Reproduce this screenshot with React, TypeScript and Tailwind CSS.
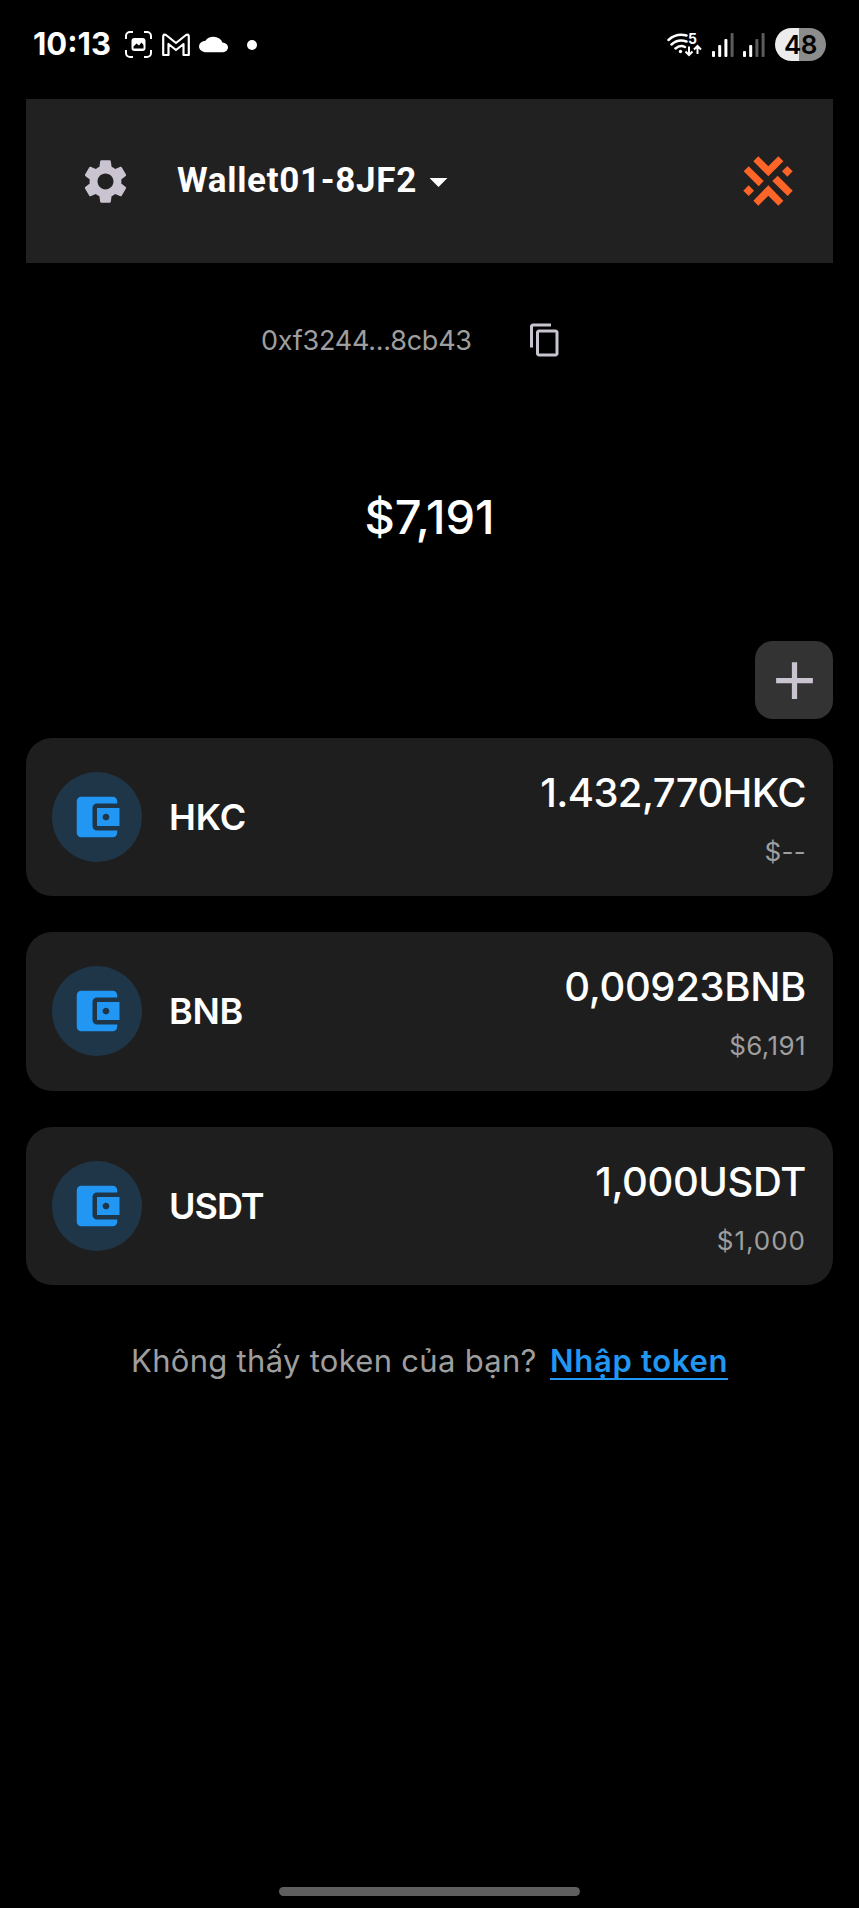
import { MdAccountBalanceWallet, MdAdd, MdArrowDropDown, MdCloud, MdContentCopy, MdSettings } from 'react-icons/md'

interface Token {
  symbol: string
  amount: string
  value: string
  symbolClass: string
  amountClass: string
  valueClass: string
}

const tokens: Token[] = [
  {
    symbol: 'HKC',
    amount: '1.432,770HKC',
    value: '$--',
    symbolClass: 'tracking-[0px]',
    amountClass: 'tracking-[-0.6px]',
    valueClass: 'tracking-[0.3px]',
  },
  {
    symbol: 'BNB',
    amount: '0,00923BNB',
    value: '$6,191',
    symbolClass: 'tracking-[-0.3px]',
    amountClass: 'tracking-[-0.35px]',
    valueClass: 'tracking-[0.4px]',
  },
  {
    symbol: 'USDT',
    amount: '1,000USDT',
    value: '$1,000',
    symbolClass: 'tracking-[-1px]',
    amountClass: 'tracking-[-0.4px]',
    valueClass: 'tracking-[1px]',
  },
]

export default function App() {
  return (
    <div className="flex h-[1908px] w-[859px] flex-col overflow-hidden bg-black font-['Inter','Noto_Sans',sans-serif] text-white">
      <StatusBar />
      <WalletHeader />

      <div className="flex h-[153px] items-center pl-[261px]">
        <span className="w-[266px] pt-1 text-[27px] tracking-[-0.25px] text-[#9e9e9e]">0xf3244...8cb43</span>
        <button type="button" aria-label="Copy">
          <MdContentCopy className="size-9 text-[#cac4d0]" />
        </button>
      </div>

      <div className="flex h-[202px] items-center justify-center text-[47px] font-medium">$7,191</div>

      <div className="mt-[23px] flex justify-end pr-[26px]">
        <button
          type="button"
          aria-label="Add"
          className="flex size-[78px] items-center justify-center rounded-[18px] bg-[#333333]"
        >
          <MdAdd className="size-[63px] text-[#cac4d0]" />
        </button>
      </div>

      <ul className="mx-[26px] mt-[18.5px] flex flex-col gap-9">
        {tokens.map((token) => (
          <TokenCard key={token.symbol} token={token} />
        ))}
      </ul>

      <div className="flex h-[152px] items-center pl-[131px] text-[31px]">
        <span className="w-[419px] whitespace-nowrap tracking-[0.3px] text-[#9e9e9e]">
          Không thấy token của bạn?
        </span>
        <a className="border-b-2 border-[#2196f3] font-semibold leading-[35px] tracking-[0.7px] text-[#2196f3]">
          Nhập token
        </a>
      </div>

      <div className="mx-auto mt-auto mb-3 h-[9px] w-[301px] rounded-full bg-[#5f5f5f]" />
    </div>
  )
}

function StatusBar() {
  return (
    <div className="mb-2.5 flex h-[89px] shrink-0 items-center pr-[33px] pl-[33px]">
      <span className="w-[92px] text-[31px] font-bold">10:13</span>
      <ScreenshotIcon />
      <MailIcon />
      <MdCloud className="ml-[9px] h-[23px] w-[29px]" preserveAspectRatio="none" />
      <span className="ml-[19px] size-2.5 rounded-full bg-white" />
      <div className="ml-auto flex items-center">
        <WifiIcon />
        <SignalIcon bars={3} />
        <SignalIcon bars={2} />
        <span className="ml-2.5 flex h-[33px] w-[51px] items-center justify-center rounded-full bg-linear-to-r from-[#ececec] from-47% to-[#8c8c8c] to-47% text-[26px] font-semibold tracking-[-0.5px] text-black">
          48
        </span>
      </div>
    </div>
  )
}

function WalletHeader() {
  return (
    <header className="mx-[26px] flex h-[164px] shrink-0 items-center bg-[#212121] pr-10 pl-[53px]">
      <MdSettings className="size-[53px] text-[#cac4d0]" />
      <button
        type="button"
        className="ml-[45px] flex items-center font-['Roboto',sans-serif] text-[35px] font-bold tracking-[0.7px]"
      >
        Wallet01-8JF2
        <MdArrowDropDown className="size-[43px]" />
      </button>
      <svg viewBox="130 198 150 150" className="ml-auto size-[50px] fill-[#fd6428]">
        <path d="M176 199l30 30 30-30 15 15-45 45-45-45z" />
        <path d="M147 229l45 44-15 16-45-45z" />
        <path d="M263 228l16 16-16 16-16-16z" />
        <path d="M234 257l45 45-15 16-46-45z" />
        <path d="M147 286l16 16-16 16-16-16z" />
        <path d="M206 286l45 46-15 15-30-30-30 30-15-15z" />
      </svg>
    </header>
  )
}

function TokenCard({ token }: { token: Token }) {
  return (
    <li className="flex h-[158.5px] items-center rounded-[26px] bg-[#1e1e1e] pr-[27px] pl-[26px]">
      <div className="flex size-[90px] items-center justify-center rounded-full bg-[#1f3548]">
        <MdAccountBalanceWallet className="size-[54px] text-[#2196f3]" />
      </div>
      <span className={`ml-[27px] text-[36px] font-semibold ${token.symbolClass}`}>{token.symbol}</span>
      <div className="ml-auto flex flex-col items-end self-start pt-[25px]">
        <span className={`text-[40px] leading-[60px] font-medium ${token.amountClass}`}>{token.amount}</span>
        <span className={`text-[26px] leading-[57px] text-[#9e9e9e] ${token.valueClass}`}>{token.value}</span>
      </div>
    </li>
  )
}

function ScreenshotIcon() {
  return (
    <svg viewBox="0 0 27 27" className="size-[27px]" fill="none">
      <path
        d="M1 8V5a4 4 0 0 1 4-4h3M19 1h3a4 4 0 0 1 4 4v3M26 19v3a4 4 0 0 1-4 4h-3M8 26H5a4 4 0 0 1-4-4v-3"
        stroke="white"
        strokeWidth="2"
      />
      <rect x="6.5" y="7" width="14" height="13" rx="3" fill="white" />
      <path d="M8.5 17.5v-2l3-3 2.5 2 2.5-3 2 2.5v3.5z" fill="black" />
    </svg>
  )
}

function MailIcon() {
  return (
    <svg viewBox="0 0 28 24" className="ml-2.5 h-6 w-7" fill="none" stroke="white" strokeWidth="2.2" strokeLinejoin="round">
      <path d="M1.2 4Q1.2 .5 4 2L14 10 24 2Q26.8 .5 26.8 4V22H21.5V11L14 17 6.5 11V22H1.200z" />
    </svg>
  )
}

function WifiIcon() {
  return (
    <svg viewBox="0 0 35 27" className="h-[27px] w-[35px]" fill="none" stroke="white" strokeWidth="2.5">
      <path d="M1.5 9Q9 2 19.500 4.500M4.500 13.500Q11 7.500 19.500 10.500M8.500 17.500Q13 13.500 18 16" strokeLinecap="round" />
      <circle cx="13.5" cy="20.5" r="1.7" fill="white" stroke="none" />
      <path d="M22 15.500v8M18.500 20.500l3.500 3.500 3.500-3.500M30.500 23v-8M27 18.500l3.500-3.500 3.500 3.500" strokeWidth="2" />
      <text x="21" y="12.5" fill="white" stroke="none" fontSize="14" fontWeight="700" fontFamily="Inter">
        5
      </text>
    </svg>
  )
}

function SignalIcon({ bars }: { bars: number }) {
  return (
    <svg viewBox="0 0 22 24" className="ml-[9.5px] h-6 w-[22px] first-of-type:ml-0">
      {[0, 1, 2, 3].map((i) => (
        <rect
          key={i}
          x={i * 6.2}
          y={18 - i * 6}
          width="3"
          height={6 + i * 6}
          rx="1"
          fill={i < bars ? 'white' : '#5c5c5c'}
        />
      ))}
    </svg>
  )
}
